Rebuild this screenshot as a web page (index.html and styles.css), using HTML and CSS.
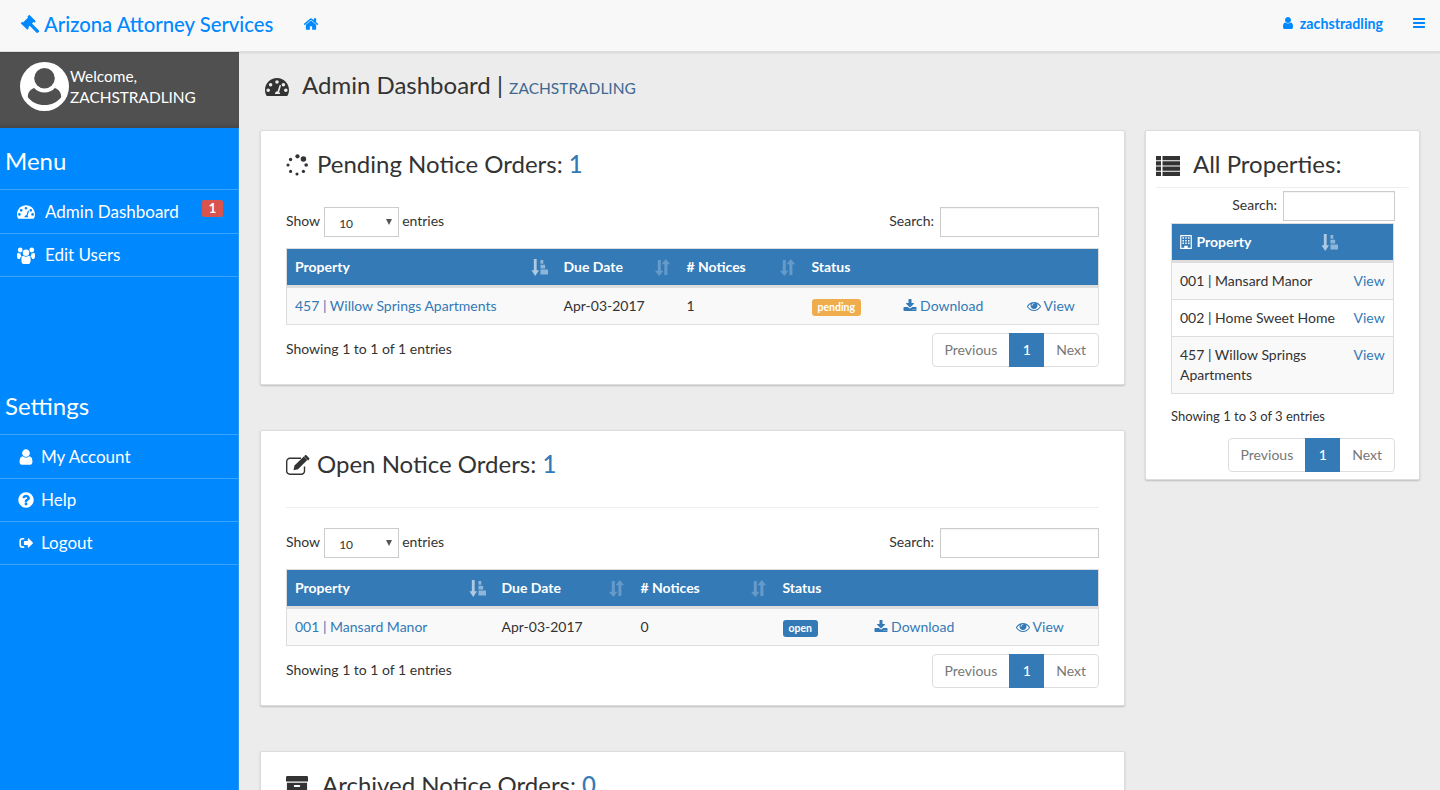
FILE: index.html
```html
<!DOCTYPE html>
<html lang="en">
<head>
    <meta charset="UTF-8">
    <meta name="viewport" content="width=device-width, initial-scale=1.0">
    <title>Admin Dashboard | Arizona Attorney Services</title>
    <link rel="stylesheet" href="styles.css">
</head>
<body>

    <svg class="sprites" xmlns="http://www.w3.org/2000/svg">
        <symbol id="i-home" viewBox="0 0 1792 1792"><path d="M1472 992v480q0 26-19 45t-45 19h-384v-384h-256v384h-384q-26 0-45-19t-19-45v-480q0-1 .5-3t.5-3l575-474 575 474q1 2 1 6zm223-69l-62 74q-8 9-21 11h-3q-13 0-21-7l-692-577-692 577q-12 8-24 7-13-2-21-11l-62-74q-8-10-7-23.5t11-21.5l719-599q32-26 76-26t76 26l244 204v-195q0-14 9-23t23-9h192q14 0 23 9t9 23v408l219 182q10 8 11 21.5t-7 23.5z"/></symbol>
        <symbol id="i-user" viewBox="0 0 1792 1792"><path d="M1536 1399q0 109-62.5 187t-150.5 78h-854q-88 0-150.5-78t-62.5-187q0-85 8.5-160.5t31.5-152 58.5-131 94-89 134.5-34.5q131 128 313 128t313-128q76 0 134.5 34.5t94 89 58.5 131 31.5 152 8.5 160.5zm-256-887q0 159-112.5 271.5t-271.5 112.5-271.5-112.5-112.5-271.5 112.5-271.5 271.5-112.5 271.5 112.5 112.5 271.5z"/></symbol>
        <symbol id="i-bars" viewBox="0 0 1792 1792"><path d="M1664 1344v128q0 26-19 45t-45 19h-1408q-26 0-45-19t-19-45v-128q0-26 19-45t45-19h1408q26 0 45 19t19 45zm0-512v128q0 26-19 45t-45 19h-1408q-26 0-45-19t-19-45v-128q0-26 19-45t45-19h1408q26 0 45 19t19 45zm0-512v128q0 26-19 45t-45 19h-1408q-26 0-45-19t-19-45v-128q0-26 19-45t45-19h1408q26 0 45 19t19 45z"/></symbol>
        <symbol id="i-eye" viewBox="0 0 1792 1792"><path d="M1664 960q-152-236-381-353 61 104 61 225 0 185-131.5 316.5t-316.5 131.5-316.5-131.5-131.5-316.5q0-121 61-225-229 117-381 353 133 205 333.5 326.5t434.5 121.5 434.5-121.5 333.5-326.5zm-720-384q0-20-14-34t-34-14q-125 0-214.5 89.5t-89.5 214.5q0 20 14 34t34 14 34-14 14-34q0-86 61-147t147-61q20 0 34-14t14-34zm848 384q0 34-20 69-140 230-376.5 368.5t-499.5 138.5-499.5-139-376.5-368q-20-35-20-69t20-69q140-229 376.5-368t499.5-139 499.5 139 376.5 368q20 35 20 69z"/></symbol>
        <symbol id="i-download" viewBox="0 0 1792 1792"><path d="M1344 1344q0-26-19-45t-45-19-45 19-19 45 19 45 45 19 45-19 19-45zm256 0q0-26-19-45t-45-19-45 19-19 45 19 45 45 19 45-19 19-45zm128-224v320q0 40-28 68t-68 28h-1472q-40 0-68-28t-28-68v-320q0-40 28-68t68-28h465l135 136q58 56 136 56t136-56l136-136h464q40 0 68 28t28 68zm-325-569q17 41-14 70l-448 448q-18 19-45 19t-45-19l-448-448q-31-29-14-70 17-39 59-39h256v-448q0-26 19-45t45-19h256q26 0 45 19t19 45v448h256q42 0 59 39z"/></symbol>
        <symbol id="i-help" viewBox="0 0 1792 1792"><path d="M1024 1376v-192q0-14-9-23t-23-9h-192q-14 0-23 9t-9 23v192q0 14 9 23t23 9h192q14 0 23-9t9-23zm256-672q0-88-55.5-163t-138.5-116-170-41q-243 0-371 213-15 24 8 42l132 100q7 6 19 6 16 0 25-12 53-68 86-92 34-24 86-24 48 0 85.5 26t37.5 59q0 38-20 61t-68 45q-63 28-115.5 86.5t-52.5 125.5v36q0 14 9 23t23 9h192q14 0 23-9t9-23q0-19 21.5-49.5t54.5-49.5q32-18 49-28.5t46-35 44.5-48 28-60.5 12.5-81zm384 192q0 209-103 385.5t-279.5 279.5-385.5 103-385.5-103-279.5-279.5-103-385.5 103-385.5 279.5-279.5 385.5-103 385.5 103 279.5 279.5 103 385.5z"/></symbol>
        <symbol id="i-gavel" viewBox="0 0 24 24"><path d="M11.2 .8l7.8 7.8-2 2-.9-.9-1.700 1.700 8 8c.7.7.7 1.500 0 2.200l-.6.6c-.7.7-1.500.7-2.200 0l-8-8-1.700 1.700.9.9-2 2L.8 11.200l2-2 .9.9 6-6-.9-.9z"/></symbol>
        <symbol id="i-gauge" viewBox="0 0 24 20"><path fill-rule="evenodd" d="M12 1C5.400 1 0 6.300 0 13c0 2 .5 3.900 1.400 5.500.3.400.7.500 1.200.500h18.800c.5 0 .9-.1 1.200-.5.900-1.600 1.400-3.500 1.400-5.500 0-6.700-5.400-12-12-12zM12 3.200a1.800 1.800 0 1 1 0 3.600 1.800 1.800 0 0 1 0-3.600zM5.600 6a1.800 1.800 0 1 1 0 3.600 1.800 1.800 0 0 1 0-3.600zM3.200 11.400a1.800 1.800 0 1 1 0 3.600 1.800 1.800 0 0 1 0-3.600zM20.800 11.400a1.800 1.800 0 1 1 0 3.600 1.800 1.800 0 0 1 0-3.600zM18.400 6a1.800 1.800 0 1 1 0 3.600 1.800 1.800 0 0 1 0-3.600zM14.600 8l1.500.6-2 6.300c.6.5 1 1.200 1 2.100H9.900c0-1.500 1.100-2.700 2.700-2.700z"/></symbol>
        <symbol id="i-users" viewBox="0 0 24 22" preserveAspectRatio="none"><circle cx="12" cy="7.500" r="4.300"/><circle cx="4.300" cy="4" r="3.200"/><circle cx="19.700" cy="4" r="3.200"/><path d="M5.800 16c0-3 1.300-4.600 3-4.700 1 .9 2 1.300 3.200 1.300s2.200-.4 3.200-1.300c1.700.1 3 1.700 3 4.700 0 4.500-.8 6-3 6H8.800c-2.200 0-3-1.500-3-6z"/><path d="M0 10.500C0 8.500.7 7.500 1.600 7.500c1 .8 2 1.100 3.200.8-.3 1.500.3 3 1.500 4-1.500.7-2.300 2-2.500 3.200H2c-1.500 0-2-1.600-2-5z"/><path d="M24 10.500c0-2-.7-3-1.600-3-1 .8-2 1.100-3.200.8.300 1.500-.3 3-1.500 4 1.500.7 2.300 2 2.500 3.200H22c1.500 0 2-1.600 2-5z"/></symbol>
        <symbol id="i-signout" viewBox="-3 -3 30 30"><path d="M8.500 3.500H6A5 5 0 0 0 1 8.500v7a5 5 0 0 0 5 5h2.500c.5 0 .8-.4.8-.8v-1.400c0-.5-.3-.8-.8-.8H6a2.400 2.400 0 0 1-2.400-2.500V8.500A2.400 2.400 0 0 1 6 6h2.500c.5 0 .8-.3.8-.8V4.300c0-.5-.3-.8-.8-.8z"/><path d="M15 5.200c0-.9 1-1.300 1.600-.7l6.700 6.600c.5.500.5 1.300 0 1.800l-6.700 6.600c-.6.600-1.600.2-1.600-.7v-3.600H9.500c-.6 0-1-.4-1-1V9.800c0-.6.400-1 1-1H15z"/></symbol>
        <symbol id="i-spinner" viewBox="0 0 24 24"><circle cx="12.500" cy="2.500" r="2.300"/><circle cx="19" cy="5.500" r="3"/><circle cx="22" cy="12" r="2"/><circle cx="19" cy="19" r="1.800"/><circle cx="12" cy="21.800" r="1.700"/><circle cx="5" cy="19" r="1.700"/><circle cx="2.200" cy="12" r="1.700"/><circle cx="5" cy="6" r="1.800"/></symbol>
        <symbol id="i-edit" viewBox="0 0 24 20"><path fill="none" stroke="currentColor" stroke-width="1.400" d="M18.500 11.500v4.500a3.200 3.200 0 0 1-3.200 3.300H4a3.200 3.200 0 0 1-3.300-3.300V6.500A3.200 3.200 0 0 1 4 3.300h11"/><path d="M8.500 10.500L17.800 1.500l3.500 3.500-9.300 9.200-4.500 1z"/><path d="M19 .3c.4-.4 1-.4 1.400 0l2.700 2.700c.4.4.4 1 0 1.400l-1 1-4-4z"/></symbol>
        <symbol id="i-list" viewBox="0 0 24 20"><path d="M0 0h5v4.200H0zM6.500 0H24v4.200H6.500zM0 5.300h5v4.200H0zM6.500 5.300H24v4.200H6.500zM0 10.600h5v4.200H0zM6.500 10.600H24v4.200H6.500zM0 15.800h5V20H0zM6.500 15.800H24V20H6.500z"/></symbol>
        <symbol id="i-archive" viewBox="0 0 24 22"><path d="M0 1.500C0 .7.600 0 1.500 0h21c.9 0 1.500.7 1.500 1.500V6H0z"/><path fill-rule="evenodd" d="M1 7.500h22V21c0 .6-.4 1-1 1H2c-.6 0-1-.4-1-1zM9.500 10c-.6 0-1 .4-1 1s.4 1 1 1h5c.6 0 1-.4 1-1s-.4-1-1-1z"/></symbol>
        <symbol id="i-building" viewBox="0 0 20 24"><path fill-rule="evenodd" d="M1 0h18c.6 0 1 .4 1 1v22c0 .6-.4 1-1 1H1c-.6 0-1-.4-1-1V1c0-.6.4-1 1-1zM2 2v20h5v-3.500h6V22h5V2z"/><path d="M4 4h2.500v2.500H4zM8.700 4h2.500v2.500H8.700zM13.500 4H16v2.500h-2.500zM4 8.500h2.500V11H4zM8.700 8.500h2.500V11H8.700zM13.500 8.500H16V11h-2.500zM4 13h2.500v2.500H4zM8.700 13h2.500v2.500H8.700zM13.500 13H16v2.500h-2.500z"/></symbol>
        <symbol id="i-sort-asc" viewBox="0 0 18 18"><path d="M3 0h3v12h2.500l-4 6-4-6H3z"/><path d="M10 1h3v4h-3zM10 6h5v4h-5zM10 11h8v5.500h-8z" opacity=".75"/></symbol>
        <symbol id="i-sort" viewBox="0 0 18 18"><path d="M4 1h3.200v11.500h2.800L5.600 18 1 12.500h3z"/><path d="M11 17h3.200V5.500H17L12.500 0 8 5.500h3z"/></symbol>
    </svg>

    <header class="navbar">
        <a class="brand" href="#"><svg class="icon brand-icon"><use href="#i-gavel"/></svg>Arizona Attorney Services</a>
        <a class="nav-home" href="#"><svg class="icon"><use href="#i-home"/></svg></a>
        <div class="nav-right">
            <a class="nav-user" href="#"><svg class="icon"><use href="#i-user"/></svg>zachstradling</a>
            <a class="nav-toggle" href="#"><svg class="icon"><use href="#i-bars"/></svg></a>
        </div>
    </header>

    <div class="layout">
        <aside class="sidebar">
            <div class="profile">
                <svg class="avatar" viewBox="0 0 50 50">
                    <circle cx="25" cy="25" r="25" fill="#fff"/>
                    <circle cx="25" cy="16.500" r="10.500" fill="#505050"/>
                    <path d="M8 35c0-4 3-7.500 6.500-8.500 2.500 3 6 4.500 10.500 4.500s8-1.500 10.500-4.500c3.500 1 6.500 4.500 6.500 8.500v1c-4 5-10 8-17 8s-13-3-17-8z" fill="#505050"/>
                </svg>
                <div class="profile-text">Welcome,<br>ZACHSTRADLING</div>
            </div>

            <h3 class="side-title">Menu</h3>
            <ul class="side-menu">
                <li class="has-badge"><a href="#"><svg class="icon icon-dash"><use href="#i-gauge"/></svg>Admin Dashboard</a><span class="side-badge">1</span></li>
                <li><a href="#"><svg class="icon icon-dash icon-users"><use href="#i-users"/></svg>Edit Users</a></li>
            </ul>

            <h3 class="side-title side-title-settings">Settings</h3>
            <ul class="side-menu side-menu-settings">
                <li><a href="#"><svg class="icon"><use href="#i-user"/></svg>My Account</a></li>
                <li><a href="#"><svg class="icon"><use href="#i-help"/></svg>Help</a></li>
                <li><a href="#"><svg class="icon"><use href="#i-signout"/></svg>Logout</a></li>
            </ul>
        </aside>

        <main class="content">
            <h1 class="page-title"><svg class="icon"><use href="#i-gauge"/></svg>Admin Dashboard | <small>ZACHSTRADLING</small></h1>

            <div class="columns">
                <div class="col-main">
                    <section class="card">
                        <h2 class="card-title"><svg class="icon"><use href="#i-spinner"/></svg>Pending Notice Orders: <span class="count">1</span></h2>
                        <div class="table-top">
                            <label class="length">Show <span class="select-wrap"><select><option>10</option></select></span> entries</label>
                            <label class="search">Search: <input type="text"></label>
                        </div>
                        <table class="orders orders-pending">
                            <colgroup><col class="c1"><col class="c2"><col class="c3"><col class="c4"><col class="c5"><col></colgroup>
                            <thead>
                                <tr>
                                    <th><div class="th-in">Property <svg class="icon sort"><use href="#i-sort-asc"/></svg></div></th>
                                    <th><div class="th-in">Due Date <svg class="icon sort sort-off"><use href="#i-sort"/></svg></div></th>
                                    <th><div class="th-in"># Notices <svg class="icon sort sort-off"><use href="#i-sort"/></svg></div></th>
                                    <th>Status</th>
                                    <th></th>
                                    <th></th>
                                </tr>
                            </thead>
                            <tbody>
                                <tr>
                                    <td><a href="#">457 | Willow Springs Apartments</a></td>
                                    <td>Apr-03-2017</td>
                                    <td>1</td>
                                    <td><span class="label label-pending">pending</span></td>
                                    <td><a href="#"><svg class="icon"><use href="#i-download"/></svg> Download</a></td>
                                    <td><a href="#"><svg class="icon"><use href="#i-eye"/></svg> View</a></td>
                                </tr>
                            </tbody>
                        </table>
                        <div class="table-bottom">
                            <div class="info">Showing 1 to 1 of 1 entries</div>
                            <div class="pager"><a href="#">Previous</a><a class="active" href="#">1</a><a href="#">Next</a></div>
                        </div>
                    </section>

                    <section class="card">
                        <h2 class="card-title"><svg class="icon icon-edit"><use href="#i-edit"/></svg>Open Notice Orders: <span class="count">1</span></h2>
                        <hr class="rule">
                        <div class="table-top">
                            <label class="length">Show <span class="select-wrap"><select><option>10</option></select></span> entries</label>
                            <label class="search">Search: <input type="text"></label>
                        </div>
                        <table class="orders orders-open">
                            <colgroup><col class="c1"><col class="c2"><col class="c3"><col class="c4"><col class="c5"><col></colgroup>
                            <thead>
                                <tr>
                                    <th><div class="th-in">Property <svg class="icon sort"><use href="#i-sort-asc"/></svg></div></th>
                                    <th><div class="th-in">Due Date <svg class="icon sort sort-off"><use href="#i-sort"/></svg></div></th>
                                    <th><div class="th-in"># Notices <svg class="icon sort sort-off"><use href="#i-sort"/></svg></div></th>
                                    <th>Status</th>
                                    <th></th>
                                    <th></th>
                                </tr>
                            </thead>
                            <tbody>
                                <tr>
                                    <td><a href="#">001 | Mansard Manor</a></td>
                                    <td>Apr-03-2017</td>
                                    <td>0</td>
                                    <td><span class="label label-open">open</span></td>
                                    <td><a href="#"><svg class="icon"><use href="#i-download"/></svg> Download</a></td>
                                    <td><a href="#"><svg class="icon"><use href="#i-eye"/></svg> View</a></td>
                                </tr>
                            </tbody>
                        </table>
                        <div class="table-bottom">
                            <div class="info">Showing 1 to 1 of 1 entries</div>
                            <div class="pager"><a href="#">Previous</a><a class="active" href="#">1</a><a href="#">Next</a></div>
                        </div>
                    </section>

                    <section class="card">
                        <h2 class="card-title card-title-wide"><svg class="icon"><use href="#i-archive"/></svg>Archived Notice Orders: <span class="count">0</span></h2>
                    </section>
                </div>

                <div class="col-side">
                    <section class="card card-side">
                        <h2 class="card-title"><svg class="icon"><use href="#i-list"/></svg>All Properties:</h2>
                        <hr class="rule">
                        <div class="side-inner">
                            <label class="search">Search: <input type="text"></label>
                            <table class="orders orders-props">
                                <colgroup><col class="c1"><col></colgroup>
                                <thead>
                                    <tr>
                                        <th><div class="th-in"><span><svg class="icon th-icon"><use href="#i-building"/></svg> Property</span> <svg class="icon sort"><use href="#i-sort-asc"/></svg></div></th>
                                        <th></th>
                                    </tr>
                                </thead>
                                <tbody>
                                    <tr><td>001 | Mansard Manor</td><td><a href="#">View</a></td></tr>
                                    <tr class="even"><td>002 | Home Sweet Home</td><td><a href="#">View</a></td></tr>
                                    <tr><td>457 | Willow Springs Apartments</td><td><a href="#">View</a></td></tr>
                                </tbody>
                            </table>
                            <div class="info info-side">Showing 1 to 3 of 3 entries</div>
                            <div class="pager pager-side"><a href="#">Previous</a><a class="active" href="#">1</a><a href="#">Next</a></div>
                        </div>
                    </section>
                </div>
            </div>
        </main>
    </div>

</body>
</html>
```

FILE: styles.css
```css
* {
    box-sizing: border-box;
}
html, body {
    height: 100%;
}
body {
    font-family: Lato, "Liberation Sans", sans-serif;
    font-size: 14px;
    line-height: 20px;
    color: #333;
    background-color: #ececec;
    margin: 0;
    display: flex;
    flex-direction: column;
    overflow: hidden;
}
a {
    color: #337ab7;
    text-decoration: none;
}
.sprites {
    display: none;
}
.icon {
    width: 1em;
    height: 1em;
    fill: currentColor;
    vertical-align: -0.125em;
}

/* top bar */
.navbar {
    flex: none;
    height: 52px;
    display: flex;
    align-items: center;
    padding: 0 14px 4px 20px;
    background-color: #f8f8f8;
    border-bottom: 1px solid #ddd;
    box-shadow: 0 1px 2px rgba(0, 0, 0, 0.1);
    position: relative;
    z-index: 2;
}
.navbar a {
    color: #0088ff;
}
.brand {
    font-size: 20.300px;
    font-weight: 500;
    display: flex;
    align-items: center;
}
.brand-icon {
    width: 20px;
    height: 20px;
    margin-right: 4px;
}
.nav-home {
    margin-left: 30px;
    font-size: 16px;
    line-height: 16px;
}
.nav-right {
    margin-left: auto;
    display: flex;
    align-items: center;
    gap: 29px;
}
.nav-user {
    font-size: 14.200px;
    font-weight: 700;
}
.nav-user .icon {
    font-size: 14px;
    margin-right: 5px;
}
.nav-toggle {
    font-size: 14px;
    line-height: 14px;
}

/* layout */
.layout {
    flex: 1;
    display: flex;
    min-height: 0;
}
.sidebar {
    flex: none;
    width: 239px;
    background-color: #0088ff;
    color: white;
    border-right: 1px solid #2b97f5;
}
.profile {
    height: 76px;
    margin-right: -1px;
    background-color: #505050;
    display: flex;
    align-items: center;
    padding: 0 0 7px 20px;
    box-shadow: inset 0 -6px 6px -6px rgba(0, 0, 0, 0.25);
}
.avatar {
    width: 49px;
    height: 49px;
    flex: none;
}
.profile-text {
    margin-left: 1px;
    font-size: 15.400px;
    line-height: 21px;
}
.side-title {
    margin: 0;
    padding: 18px 0 0 5px;
    height: 61px;
    font-size: 24px;
    line-height: 30px;
    font-weight: 400;
}
.side-title-settings {
    margin-top: 114px;
    height: 43px;
    padding-top: 0;
}
.side-menu {
    list-style: none;
    margin: 0;
    padding: 0;
    border-top: 1px solid #3aa3fb;
}
.side-menu li {
    height: 43px;
    border-bottom: 1px solid #3aa3fb;
    position: relative;
}
.side-menu li:first-child {
    height: 44px;
}
.side-menu a {
    color: white;
    font-size: 17px;
    line-height: 42px;
    display: flex;
    align-items: center;
    padding-left: 17px;
    height: 100%;
}
.side-menu .icon-dash {
    width: 18px;
    height: 16px;
    margin-right: 10px;
}
.side-menu .icon-users {
    height: 17px;
}
.side-menu-settings a {
    padding-left: 17px;
}
.side-menu-settings .icon {
    width: 18px;
    height: 18px;
    margin-right: 6px;
}
.side-badge {
    position: absolute;
    top: 10px;
    left: 202px;
    width: 21px;
    height: 17px;
    border-radius: 2px;
    background-color: #d9534f;
    font-size: 13px;
    font-weight: 700;
    line-height: 17px;
    text-align: center;
}

/* main area */
.content {
    flex: 1;
    min-width: 0;
    padding: 0 20px 0 21px;
}
.page-title {
    margin: 0;
    height: 78px;
    padding: 17px 0 0 5px;
    font-size: 24px;
    line-height: 32px;
    font-weight: 400;
}
.page-title .icon {
    margin-right: 13px;
    width: 24px;
    height: 20px;
    vertical-align: -3px;
}
.page-title small {
    font-size: 15.500px;
    color: #40688f;
}
.columns {
    display: flex;
    align-items: flex-start;
    gap: 20px;
}
.col-main {
    width: 865px;
    flex: none;
}
.col-side {
    width: 275px;
    flex: none;
}
.card {
    background-color: white;
    border: 1px solid #ddd;
    border-radius: 2px;
    box-shadow: 0 1px 2px rgba(0, 0, 0, 0.2);
    padding: 19px 25px 17px;
    margin-bottom: 45px;
}
.card-title {
    margin: 0 0 29px;
    font-size: 24px;
    line-height: 28px;
    font-weight: 400;
}
.card-title .icon {
    width: 22px;
    height: 22px;
    margin-right: 9px;
    vertical-align: -3px;
}
.card-title .icon-edit {
    width: 24px;
    height: 20px;
    margin-right: 7px;
    vertical-align: -2px;
}
.card-title-wide .icon {
    margin-right: 14px;
}
.count {
    color: #337ab7;
    font-weight: 500;
}
.rule {
    border: 0;
    border-top: 1px solid #eee;
    margin: 0 0 20px;
}

/* datatable controls */
.table-top {
    display: flex;
    justify-content: space-between;
    align-items: center;
    height: 30px;
    margin-bottom: 11px;
}
.length, .search {
    display: flex;
    align-items: flex-start;
    line-height: 28px;
    gap: 4px;
}
.search {
    gap: 6px;
}
.select-wrap {
    position: relative;
    display: block;
    margin-right: -1px;
}
.select-wrap::after {
    content: "";
    position: absolute;
    top: 12px;
    right: 7px;
    border-top: 6px solid #555;
    border-left: 3px solid transparent;
    border-right: 3px solid transparent;
}
select {
    appearance: none;
    display: block;
    width: 75px;
    height: 30px;
    padding: 2px 0 0 14px;
    font-family: inherit;
    font-size: 12px;
    color: #333;
    background-color: white;
    border: 1px solid #ccc;
    border-radius: 0;
}
input[type="text"] {
    display: block;
    width: 159px;
    height: 30px;
    padding: 0 6px;
    border: 1px solid #ccc;
    border-radius: 0;
    box-shadow: inset 0 1px 1px rgba(0, 0, 0, 0.05);
}

/* tables */
.orders {
    width: 100%;
    table-layout: fixed;
    border-collapse: collapse;
    border: 1px solid #ddd;
}
.orders th {
    height: 38px;
    padding: 0 8px;
    background-color: #337ab7;
    color: white;
    font-weight: 700;
    text-align: left;
    border-bottom: 3px solid #ddd;
    background-clip: padding-box;
}
.orders td {
    height: 36px;
    padding: 8px;
    background-color: #f9f9f9;
    border-bottom: 1px solid #ddd;
    vertical-align: top;
}
.orders .even td {
    background-color: white;
}
.th-in {
    display: flex;
    align-items: center;
    justify-content: space-between;
}
.sort {
    width: 17px;
    height: 17px;
    flex: none;
    opacity: 0.6;
}
.sort-off {
    opacity: 0.25;
}
.th-icon {
    width: 12px;
    height: 14px;
    vertical-align: -2px;
    margin-right: 1px;
}
.orders-pending .c1 { width: 269px; }
.orders-pending .c2 { width: 123px; }
.orders-pending .c3 { width: 125px; }
.orders-pending .c4 { width: 91px; }
.orders-pending .c5 { width: 124px; }
.orders-open .c1 { width: 207px; }
.orders-open .c2 { width: 139px; }
.orders-open .c3 { width: 142px; }
.orders-open .c4 { width: 91px; }
.orders-open .c5 { width: 142px; }
.orders-props .c1 { width: 174px; }
.label {
    display: inline-block;
    padding: 0 6px;
    height: 17px;
    margin-top: 3px;
    border-radius: 3px;
    color: white;
    font-size: 10.500px;
    font-weight: 700;
    line-height: 17px;
    vertical-align: top;
}
.label-pending {
    background-color: #f0ad4e;
}
.label-open {
    background-color: #337ab7;
}
.table-bottom {
    display: flex;
    justify-content: space-between;
    align-items: flex-start;
    margin-top: 8px;
}
.info {
    padding-top: 6px;
}
.pager {
    display: flex;
    height: 34px;
}
.pager a {
    padding: 6px 12px;
    margin-left: -1px;
    color: #777;
    background-color: white;
    border: 1px solid #ddd;
}
.pager a:first-child {
    margin-left: 0;
    border-radius: 4px 0 0 4px;
}
.pager a:last-child {
    border-radius: 0 4px 4px 0;
}
.pager .active {
    position: relative;
    width: 35px;
    text-align: center;
    color: white;
    background-color: #337ab7;
    border-color: #337ab7;
    font-weight: 500;
}

/* side card */
.card-side {
    padding: 19px 10px 7px;
    margin-bottom: 0;
}
.card-side .card-title {
    margin-bottom: 9px;
}
.card-side .card-title .icon {
    width: 24px;
    height: 20px;
    margin-right: 13px;
}
.card-side .rule {
    margin: 0 0 3px;
}
.side-inner {
    padding: 0 14px 0 15px;
}
.side-inner .search {
    justify-content: flex-end;
    margin-bottom: 2px;
}
.side-inner input[type="text"] {
    width: 112px;
}
.orders-props {
    width: 223px;
}
.info-side {
    font-size: 13px;
    padding-top: 0;
    margin-top: 12px;
}
.pager-side {
    justify-content: flex-end;
    margin-top: 12px;
}
```
